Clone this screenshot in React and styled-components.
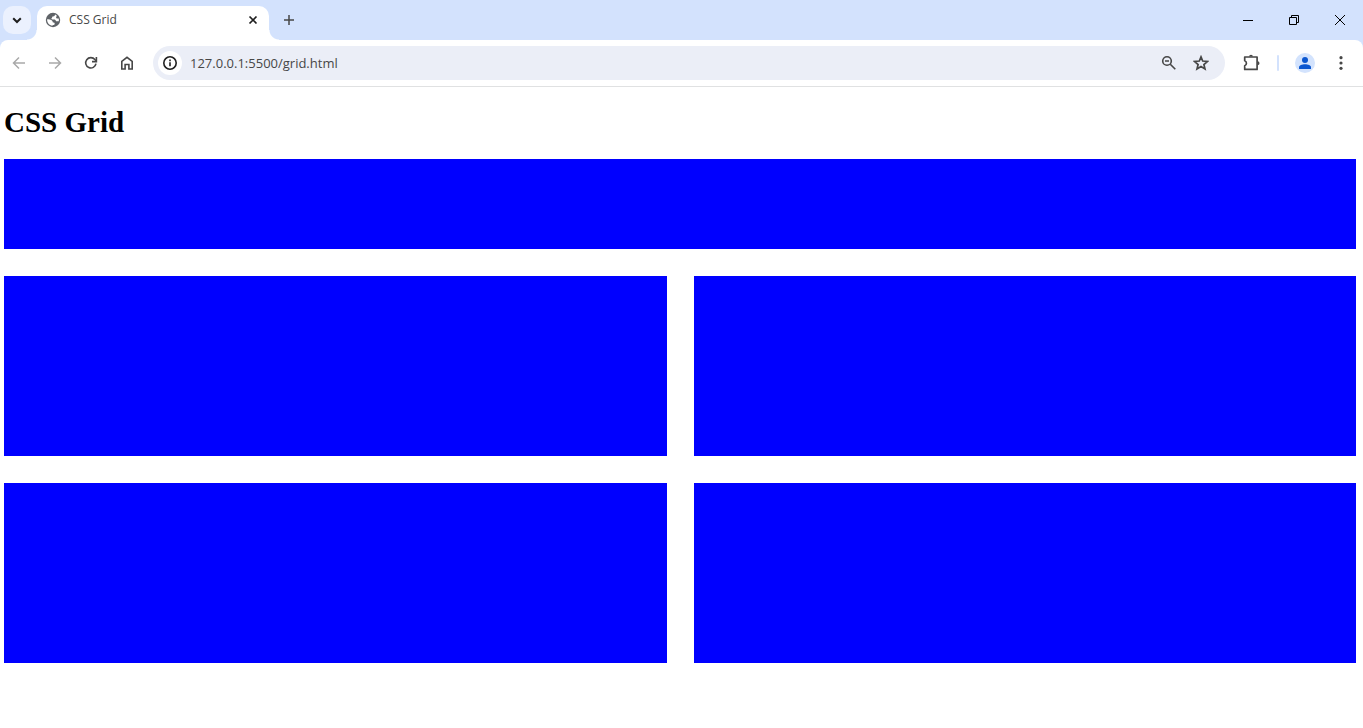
import React from "react";
import styled, { createGlobalStyle } from "styled-components";

const GlobalStyle = createGlobalStyle`
  *, *::before, *::after { box-sizing: border-box; }
  body { margin: 0; background: #fff; }
`;

const Browser = styled.div`
  display: flex;
  flex-direction: column;
  font-family: "Open Sans", "Noto Sans", sans-serif;
`;

const TabStrip = styled.header`
  display: flex;
  align-items: center;
  height: 40px;
  padding-left: 3px;
  background: #d3e2fd;
`;

const IconButton = styled.button`
  display: flex;
  align-items: center;
  justify-content: center;
  flex: none;
  width: ${(p) => p.$width || 28}px;
  height: 28px;
  padding: 0;
  border: 0;
  border-radius: ${(p) => p.$radius || 14}px;
  background: ${(p) => p.$fill || "transparent"};
  color: ${(p) => p.$color || "#474747"};
  svg { display: block; }
`;

const Tab = styled.div`
  position: relative;
  display: flex;
  align-items: center;
  align-self: flex-end;
  gap: 8px;
  width: 232px;
  height: 34px;
  margin-left: 6px;
  padding: 0 2px 6px 8px;
  border-radius: 10px 10px 0 0;
  background: #fff;

  &::before,
  &::after {
    content: "";
    position: absolute;
    bottom: 0;
    width: 10px;
    height: 10px;
  }
  &::before {
    right: 100%;
    background: radial-gradient(circle at 0 0, transparent 9px, #fff 10px);
  }
  &::after {
    left: 100%;
    background: radial-gradient(circle at 100% 0, transparent 9px, #fff 10px);
  }
`;

const TabTitle = styled.span`
  flex: 1;
  font-size: 12px;
  font-weight: 400;
  line-height: 18px;
  color: #474747;
`;

const WindowControls = styled.div`
  display: flex;
  margin-left: auto;
`;

const ToolbarBack = styled.div`
  background: #d3e2fd;
`;

const Toolbar = styled.nav`
  display: flex;
  align-items: center;
  height: 47px;
  padding: 0 0 1px 5px;
  border-bottom: 1px solid #e0e1e2;
  border-radius: 8px 8px 0 0;
  background: #fff;
`;

const NavButtons = styled.div`
  display: flex;
  gap: 8px;
`;

const AddressBar = styled.div`
  display: flex;
  align-items: center;
  flex: 1;
  height: 34px;
  margin-left: 12px;
  padding: 0 8px 0 5px;
  border-radius: 17px;
  background: #ebeef7;
`;

const SiteInfo = styled(IconButton)`
  width: 24px;
  height: 24px;
`;

const AddressInput = styled.input`
  flex: 1;
  min-width: 0;
  height: 24px;
  margin-left: 8px;
  padding: 0;
  border: 0;
  outline: 0;
  background: transparent;
  font: 13px/20px "Open Sans", "Noto Sans", sans-serif;
  color: #474747;
`;

const Divider = styled.span`
  width: 2px;
  height: 16px;
  margin: 0 12px;
  border-radius: 1px;
  background: #d3e2fd;
`;

const Actions = styled.div`
  display: flex;
  align-items: center;
  margin-left: 12px;
`;

const Page = styled.main`
  padding: 20px 7px 20px 4px;
`;

const Heading = styled.h1`
  margin: 0 0 22px;
  font: bold 29px/30px "Liberation Serif", "Times New Roman", serif;
  color: #000;
`;

const Grid = styled.div`
  display: grid;
  grid-template-columns: 1fr 1fr;
  gap: 27px;
`;

const Cell = styled.div`
  grid-column: ${(p) => (p.$wide ? "1 / -1" : "auto")};
  height: ${(p) => (p.$wide ? 90 : 180)}px;
  background: #00f;
`;

const Icon = ({ size = 16, stroke = 2, children }) => (
  <svg
    width={size}
    height={size}
    viewBox={`0 0 ${size} ${size}`}
    fill="none"
    stroke="currentColor"
    strokeWidth={stroke}
    aria-hidden="true"
  >
    {children}
  </svg>
);

export default function App() {
  return (
    <Browser>
      <GlobalStyle />
      <TabStrip>
        <IconButton $fill="#ebf1fe" $radius={10} $color="#1f1f1f" aria-label="Search tabs">
          <Icon><path d="M4.2 6.2 8 10l3.8-3.8" /></Icon>
        </IconButton>
        <Tab>
          <svg width="16" height="16" viewBox="0 0 16 16" aria-hidden="true">
            <circle cx="8" cy="8" r="7.2" fill="#5f6368" />
            <path
              fill="#fff"
              d="M10 2.500c0 1.300-.8 2-1.900 2-.8 0-1 .4-1 1.100 0 .5-.3.700-.8.900.1.600.6.900 1.300.900h1.500c1.100 0 1.600.6 1.700 1.300.1.500.4.600.9.600h2c.1-.4.200-.8.200-1.300 0-.5-.1-1-.2-1.400h-1.200c-.9 0-1.400-.5-1.400-1.300 0-.7.300-1.100.9-1.300C11.400 3.300 10.700 2.800 10 2.500z"
            />
            <path
              fill="#fff"
              d="M2.100 7.300c1.600-.1 3.100 0 4.100.6 1.100.6 1.500 1.200 1.500 2 0 .4.300.6.800.6.900 0 1.200.6 1.200 1.300 0 .8-.6 1.200-1.500 1.200-.5 0-.8.200-.8.800C4.300 13.500 2 10.900 2.100 7.300z"
            />
          </svg>
          <TabTitle>CSS Grid</TabTitle>
          <IconButton $color="#1f1f1f" aria-label="Close tab">
            <Icon stroke={1.7}><path d="m4.500 4.500 7 7m0-7-7 7" /></Icon>
          </IconButton>
        </Tab>
        <IconButton $width={40} aria-label="New tab">
          <Icon stroke={1.5}><path d="M8 3v10M3 8h10" /></Icon>
        </IconButton>
        <WindowControls>
          <IconButton $width={46} $color="#000" aria-label="Minimize">
            <Icon stroke={1}><path d="M3 8.500h10" /></Icon>
          </IconButton>
          <IconButton $width={46} $color="#000" aria-label="Restore">
            <Icon stroke={1}><path d="M3.500 5.500h7v7h-7zM5.500 5.500v-2h7v7h-2" /></Icon>
          </IconButton>
          <IconButton $width={46} $color="#000" aria-label="Close">
            <Icon stroke={1}><path d="m3 3 10 10M13 3 3 13" /></Icon>
          </IconButton>
        </WindowControls>
      </TabStrip>

      <ToolbarBack>
        <Toolbar>
          <NavButtons>
            <IconButton $color="#a9a9a9" aria-label="Back">
              <Icon stroke={1.5}><path d="M14 8H3M8 2.500 2.500 8 8 13.500" /></Icon>
            </IconButton>
            <IconButton $color="#a9a9a9" aria-label="Forward">
              <Icon stroke={1.5}><path d="M2 8h11M8 2.500 13.500 8 8 13.500" /></Icon>
            </IconButton>
            <IconButton aria-label="Reload">
              <Icon stroke={1.6}>
                <path d="M13 8.700A5.200 5.200 0 1 1 11.900 4.500L13.200 6" />
                <path d="M13.400 2v4.600H9" />
              </Icon>
            </IconButton>
            <IconButton aria-label="Home">
              <Icon stroke={1.6}><path d="M2.800 14V6.300L8 2.300l5.200 4V14H9.900V9.500H6.100V14z" /></Icon>
            </IconButton>
          </NavButtons>
          <AddressBar>
            <SiteInfo $fill="#fff" $color="#1f1f1f" aria-label="View site information">
              <Icon stroke={1.6}>
                <circle cx="8" cy="8" r="6.200" />
                <path d="M8 7.300v3.900M8 4.600v1.600" />
              </Icon>
            </SiteInfo>
            <AddressInput aria-label="Address" defaultValue="127.0.0.1:5500/grid.html" spellCheck={false} />
            <IconButton $width={32} aria-label="Zoom">
              <Icon stroke={1.6}>
                <circle cx="6" cy="6" r="4.300" />
                <path d="m9.300 9.300 5 5M4 6h4" />
              </Icon>
            </IconButton>
            <IconButton $width={32} aria-label="Bookmark this tab">
              <Icon stroke={1.7}>
                <path d="m8 1.900 1.700 4.100 4.800.4-3.600 3.100 1.100 4.500L8 11.600 4 14l1.100-4.500-3.600-3.100 4.800-.4z" />
              </Icon>
            </IconButton>
          </AddressBar>
          <Actions>
            <IconButton aria-label="Extensions">
              <Icon size={18} stroke={1.7}>
                <path d="M2.700 3h12.400v12.400H2.700v-3.700c2.300-.7 2.300-4.300 0-5z" strokeLinejoin="round" />
                <path d="M7.100 2.600a1.900 1.900 0 0 1 3.800 0zM15.600 7.300a1.900 1.900 0 0 1 0 3.800z" fill="currentColor" stroke="none" />
              </Icon>
            </IconButton>
            <Divider />
            <IconButton aria-label="Profile">
              <svg width="20" height="20" viewBox="0 0 20 20" aria-hidden="true">
                <circle cx="10" cy="10" r="10" fill="#d3e3fd" />
                <circle cx="10" cy="7" r="3" fill="#0b57d0" />
                <path d="M4 16v-1.800C4 12.200 7 11.200 10 11.200s6 1 6 3V16z" fill="#0b57d0" />
              </svg>
            </IconButton>
            <IconButton $width={44} aria-label="Menu">
              <Icon>
                <g fill="currentColor" stroke="none">
                  <circle cx="8" cy="2.700" r="1.600" />
                  <circle cx="8" cy="8" r="1.600" />
                  <circle cx="8" cy="13.300" r="1.600" />
                </g>
              </Icon>
            </IconButton>
          </Actions>
        </Toolbar>
      </ToolbarBack>

      <Page>
        <Heading>CSS Grid</Heading>
        <Grid>
          <Cell $wide />
          <Cell />
          <Cell />
          <Cell />
          <Cell />
        </Grid>
      </Page>
    </Browser>
  );
}
